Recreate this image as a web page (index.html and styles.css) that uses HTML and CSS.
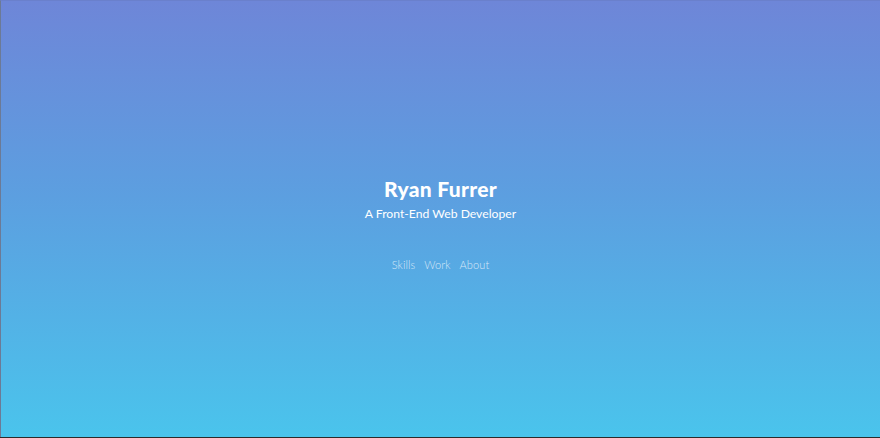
FILE: index.html
```html
<!DOCTYPE html>
<html>
<head>
<meta charset="utf-8">
<link rel="stylesheet" href="styles.css">
</head>
<body>
<main class="hero">
  <div class="intro">
    <h1 class="name">Ryan Furrer</h1>
    <p class="tagline">A Front-End Web Developer</p>
    <nav class="nav">
      <a href="#">Skills</a>
      <a href="#">Work</a>
      <a href="#">About</a>
    </nav>
  </div>
</main>
</body>
</html>
```
FILE: styles.css
```css
html, body {
  margin: 0;
  padding: 0;
  height: 100%;
}
body {
  background: #2b2b2b;
  font-family: "Lato", "Open Sans", sans-serif;
}
.hero {
  box-sizing: border-box;
  height: 437px;
  border-left: 1px solid #6c7a96;
  border-top: 1px solid #6a80cc;
  background: linear-gradient(to bottom, #6e86d8 0%, #5c9fe0 45%, #4ac4ec 100%);
  display: flex;
  align-items: center;
  justify-content: center;
}
.intro {
  display: flex;
  flex-direction: column;
  align-items: center;
  padding-top: 9px;
}
.name {
  margin: 0;
  color: #ffffff;
  font-size: 21px;
  font-weight: 900;
  letter-spacing: 0.3px;
  line-height: 26px;
}
.tagline {
  margin: 4px 0 0;
  color: #ffffff;
  font-size: 12.2px;
  font-weight: 400;
  line-height: 16px;
}
.nav {
  margin-top: 36px;
  display: flex;
  gap: 9px;
}
.nav a {
  color: rgba(255, 255, 255, 0.75);
  text-decoration: none;
  font-size: 11px;
  font-weight: 300;
  line-height: 14px;
  letter-spacing: 0.1px;
}
```
